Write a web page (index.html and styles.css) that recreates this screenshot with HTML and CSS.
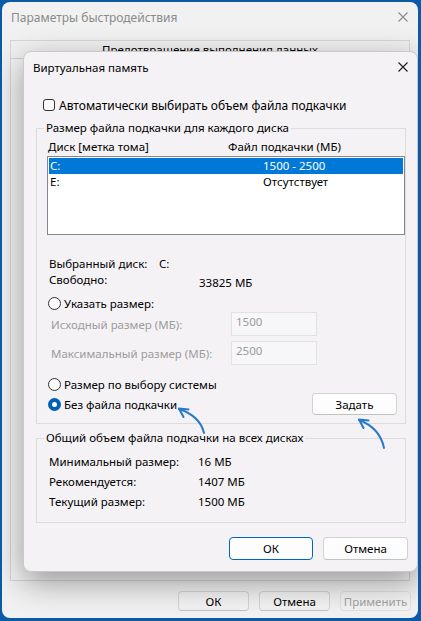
FILE: index.html
```html
<!DOCTYPE html>
<html lang="ru">

<head>
    <meta charset="UTF-8">
    <meta name="viewport" content="width=device-width, initial-scale=1.0">
    <title>Параметры быстродействия</title>
    <link rel="stylesheet" href="styles.css">
</head>

<body>
    <div class="window">
        <div class="win-title">
            <span>Параметры быстродействия</span>
            <svg class="close" width="10" height="10" viewBox="0 0 10 10">
                <path d="M0.5 0.5L9.5 9.5M9.5 0.5L0.5 9.5" />
            </svg>
        </div>
        <div class="tab">Предотвращение выполнения данных</div>
        <div class="tab-panel"></div>
        <div class="win-buttons">
            <button class="btn">ОК</button>
            <button class="btn">Отмена</button>
            <button class="btn" disabled>Применить</button>
        </div>

        <!-- окно поверх -->
        <div class="dialog">
            <div class="dlg-title">
                <span>Виртуальная память</span>
                <svg class="close dark" width="10" height="10" viewBox="0 0 10 10">
                    <path d="M0.5 0.5L9.5 9.5M9.5 0.5L0.5 9.5" />
                </svg>
            </div>
            <div class="dlg-body">
                <div class="check-row"><span class="checkbox"></span>Автоматически выбирать объем файла подкачки</div>

                <fieldset class="group group-disk">
                    <legend>Размер файла подкачки для каждого диска</legend>
                    <div class="list-head"><span class="col-disk">Диск [метка тома]</span><span>Файл подкачки (МБ)</span></div>
                    <ul class="list">
                        <li class="selected"><span class="col-name">C:</span><span>1500 - 2500</span></li>
                        <li><span class="col-name">E:</span><span>Отсутствует</span></li>
                    </ul>
                    <div class="info-row first"><span class="info-label">Выбранный диск:</span><span>C:</span></div>
                    <div class="info-row"><span class="info-label wide">Свободно:</span><span class="free">33825 МБ</span></div>
                    <div class="radio-row custom"><span class="radio"></span>Указать размер:</div>
                    <div class="field-row first"><span class="field-label">Исходный размер (МБ):</span><span class="textbox">1500</span></div>
                    <div class="field-row"><span class="field-label">Максимальный размер (МБ):</span><span class="textbox">2500</span></div>
                    <div class="radio-row system"><span class="radio"></span>Размер по выбору системы</div>
                    <div class="radio-row none"><span class="radio checked"></span>Без файла подкачки<button class="btn set">Задать</button></div>
                </fieldset>

                <fieldset class="group group-total">
                    <legend>Общий объем файла подкачки на всех дисках</legend>
                    <div class="total-row"><span class="total-label">Минимальный размер:</span><span>16 МБ</span></div>
                    <div class="total-row"><span class="total-label">Рекомендуется:</span><span>1407 МБ</span></div>
                    <div class="total-row"><span class="total-label">Текущий размер:</span><span>1500 МБ</span></div>
                </fieldset>

                <div class="dlg-buttons">
                    <button class="btn default">ОК</button>
                    <button class="btn">Отмена</button>
                </div>
            </div>

            <svg class="arrows" width="395" height="521" viewBox="0 0 395 521">
                <path d="M181 382Q177 365 156 358" />
                <path d="M165.5 358.5L156 357.5L160.5 366" />
                <path d="M361 397Q357 377 336 369" />
                <path d="M345.5 369.5L336 368.5L340.5 377" />
            </svg>
        </div>
    </div>
</body>

</html>
```

FILE: styles.css
```css
* {
    box-sizing: border-box;
    margin: 0;
    padding: 0;
}

body {
    background: #0c5aa6;
    padding: 2px;
    font-family: "Noto Sans", sans-serif;
    font-size: 11.5px;
    color: #000;
}

.window {
    position: relative;
    width: 416px;
    height: 616px;
    background: #f1f1f1;
    border-radius: 8px;
    display: flex;
    flex-direction: column;
    overflow: hidden;
}

.win-title {
    height: 30px;
    display: flex;
    align-items: center;
    justify-content: space-between;
    padding: 0 10px 0 9px;
    color: #8a8a8a;
    font-size: 12px;
}

.close path {
    stroke: #8a8a8a;
    stroke-width: 1.1;
    fill: none;
}

.close.dark path {
    stroke: #1a1a1a;
}

.tab {
    margin: 8px 8px 0;
    height: 18px;
    line-height: 18px;
    text-align: center;
    border: 1px solid #d6d6d6;
    border-bottom: 0;
}

.tab-panel {
    margin: 0 8px;
    height: 523px;
    border: 1px solid #d3d3d3;
    background: #f3f3f3;
}

.win-buttons {
    margin-top: 10px;
    display: flex;
    justify-content: flex-end;
    gap: 10px;
    padding-right: 7px;
}

.btn {
    font-family: inherit;
    font-size: 11.5px;
    color: #000;
    background: #fdfdfd;
    border: 1px solid #d3d3d3;
    border-bottom-color: #c2c2c2;
    border-radius: 4px;
}

.win-buttons .btn {
    width: 71px;
    height: 20px;
    background: #f2f2f2;
}

.btn:disabled {
    color: #a2a2a2;
    border-color: #e0e0e0;
}

/* Виртуальная память */
.dialog {
    position: absolute;
    left: 21px;
    top: 49px;
    width: 395px;
    height: 521px;
    background: #f4f2f5;
    border: 1px solid #c9c9c9;
    border-radius: 8px;
    box-shadow: 0 10px 32px rgba(0, 0, 0, 0.38);
}

.dlg-title {
    height: 30px;
    display: flex;
    align-items: center;
    justify-content: space-between;
    padding: 0 9px 0 9px;
}

.dlg-body {
    padding: 0 11px 0 12px;
}

.check-row {
    margin-top: 15px;
    height: 16px;
    display: flex;
    align-items: center;
    padding-left: 7px;
    font-size: 12px;
}

.checkbox {
    width: 12px;
    height: 12px;
    border: 1px solid #333;
    border-radius: 3px;
    margin-right: 4px;
    background: #fbfbfb;
}

.group {
    border: 1px solid #dcdcdc;
    min-width: 0;
    width: 370px;
}

.group legend {
    margin-left: 7px;
    padding: 0 2px;
    line-height: 16px;
}

.group-disk {
    margin-top: 7px;
    padding-bottom: 8px;
}

.list-head {
    margin-top: 3px;
    height: 16px;
    line-height: 16px;
    display: flex;
    padding-left: 11px;
}

.col-disk {
    width: 180px;
}

.list {
    list-style: none;
    margin: 1px 0 0 10px;
    width: 358px;
    height: 79px;
    border: 1px solid #828790;
    background: #fff;
    padding: 1px;
}

.list li {
    height: 16px;
    line-height: 16px;
    display: flex;
    padding-left: 1px;
}

.list li.selected {
    background: #0078d7;
    color: #fff;
}

.col-name {
    width: 213px;
}

.info-row {
    height: 16px;
    line-height: 16px;
    display: flex;
    align-items: flex-start;
    padding-left: 12px;
}

.info-row.first {
    margin-top: 21px;
}

.info-label {
    width: 110px;
}

.info-label.wide {
    width: 150px;
}

.free {
    margin-top: 3px;
}

.radio-row {
    height: 16px;
    display: flex;
    align-items: center;
    padding-left: 11px;
}

.radio-row.custom {
    margin-top: 7px;
}

.radio-row.system {
    margin-top: 11px;
}

.radio-row.none {
    height: 22px;
    margin-top: 1px;
}

.radio {
    width: 13px;
    height: 13px;
    border: 1px solid #333;
    border-radius: 50%;
    margin-right: 3px;
    background: #fbfbfb;
}

.radio.checked {
    border: 4px solid #005fb8;
    background: #fff;
}

.set {
    margin-left: auto;
    margin-right: 8px;
    width: 85px;
    height: 22px;
}

.field-row {
    height: 24px;
    margin-top: 5px;
    display: flex;
    align-items: center;
    padding-left: 14px;
    color: #9c9c9c;
}

.field-row.first {
    margin-top: 1px;
}

.field-label {
    width: 180px;
}

.textbox {
    width: 86px;
    height: 24px;
    border: 1px solid #e2e2e2;
    background: #f7f6f8;
    padding: 1px 0 0 4px;
    line-height: 16px;
}

.group-total {
    margin-top: 6px;
    padding: 6px 0 10px;
}

.total-row {
    height: 20px;
    line-height: 20px;
    display: flex;
    padding-left: 12px;
}

.total-label {
    width: 149px;
}

.dlg-buttons {
    margin-top: 14px;
    margin-right: -2px;
    display: flex;
    justify-content: flex-end;
    gap: 10px;
}

.dlg-buttons .btn {
    width: 85px;
    height: 23px;
}

.dlg-buttons .btn.default {
    width: 84px;
    border: 1px solid #0067c0;
}

.arrows {
    position: absolute;
    left: -1px;
    top: -1px;
    pointer-events: none;
}

.arrows path {
    fill: none;
    stroke: #2a78c8;
    stroke-width: 2;
    stroke-linecap: round;
    stroke-linejoin: round;
}
```
